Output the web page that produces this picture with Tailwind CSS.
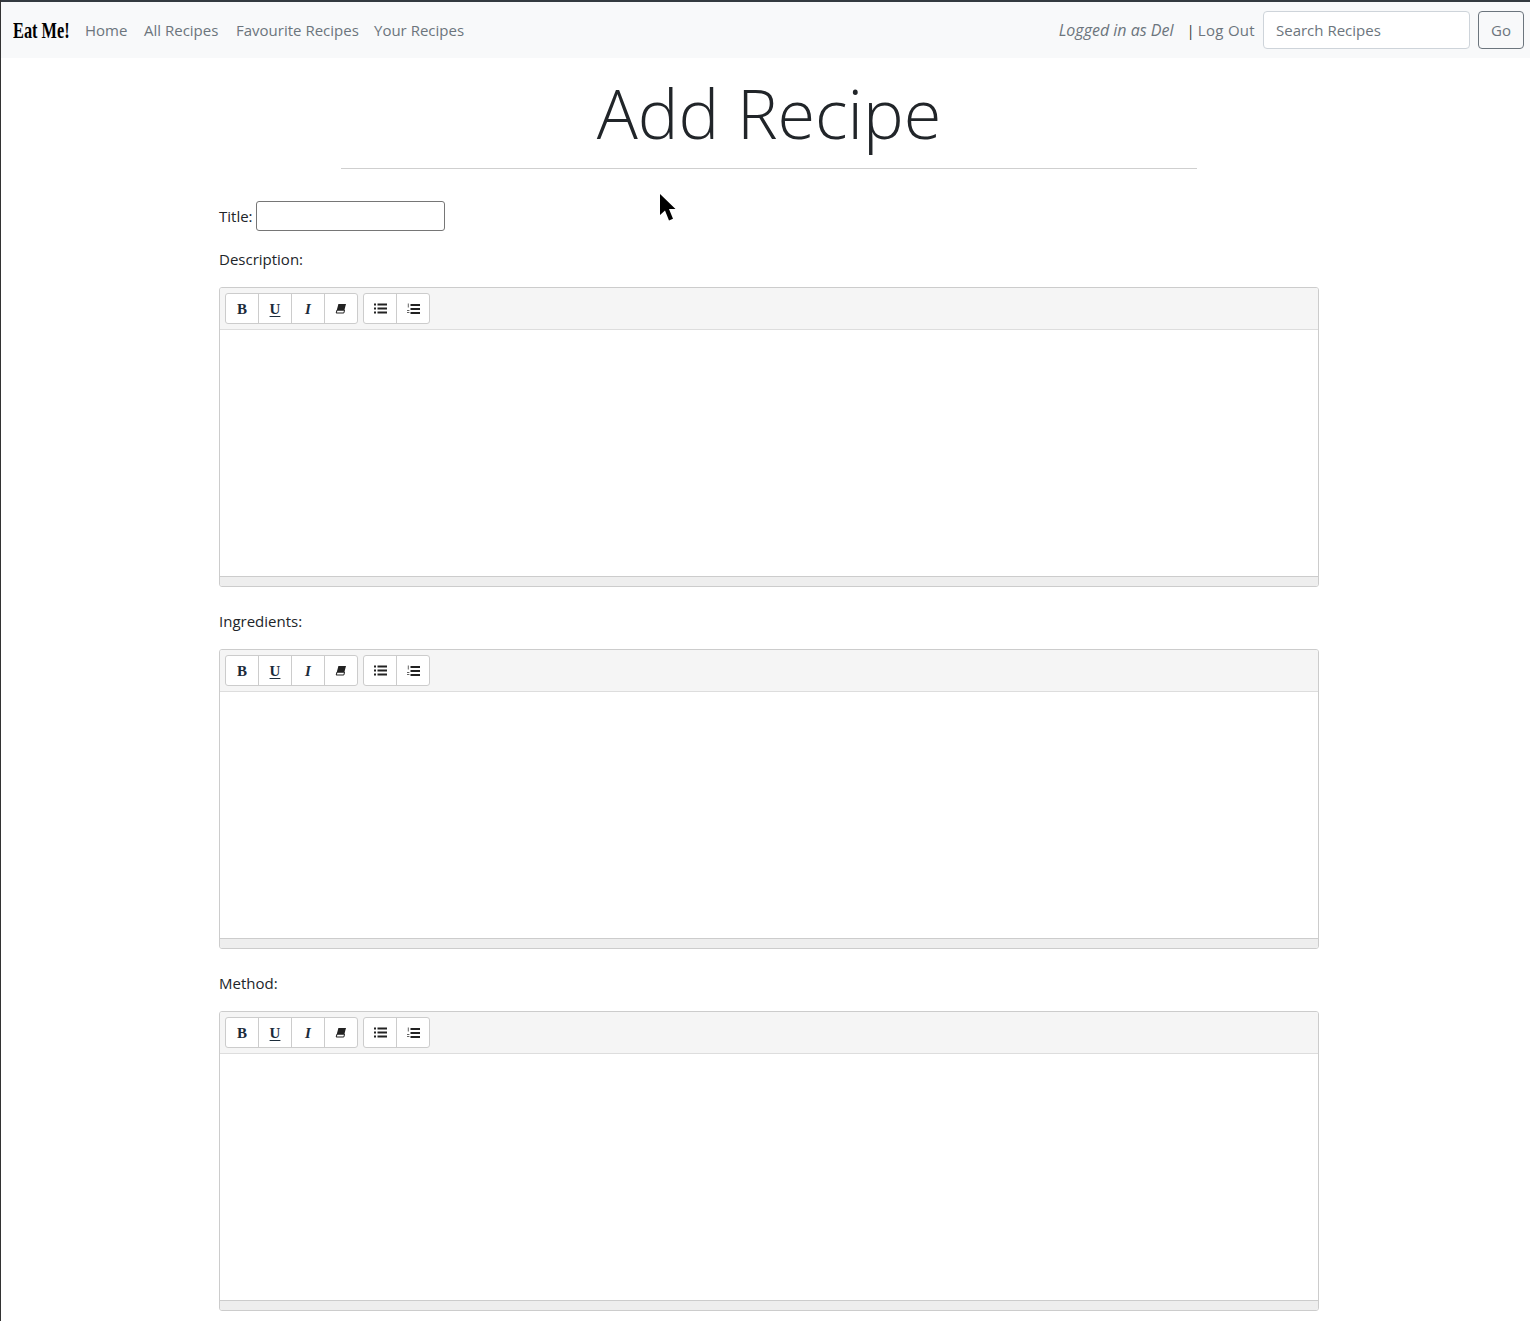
<!DOCTYPE html>
<html lang="en">
<head>
  <meta charset="UTF-8" />
  <meta name="viewport" content="width=device-width, initial-scale=1" />
  <title>Add Recipe</title>
  <script src="https://cdn.jsdelivr.net/npm/@tailwindcss/browser@4"></script>
</head>
<body class="relative h-[1321px] overflow-hidden bg-white border-l border-[#333] font-['Open_Sans',sans-serif] text-[15px] text-[#212529]">

  <!-- Navbar -->
  <nav class="flex items-center h-[58px] pl-3 pr-[6px] bg-[#f8f9fa] border-t-2 border-[#343a40] text-[#6c757d]">
    <a class="inline-block w-[56px] mr-4 font-['Liberation_Serif',serif] font-bold text-[24px] text-black origin-left scale-x-[0.68] whitespace-nowrap">Eat Me!</a>
    <a class="w-[43px] mr-4">Home</a>
    <a class="w-[76px] mr-4">All Recipes</a>
    <a class="w-[122px] mr-4 whitespace-nowrap">Favourite Recipes</a>
    <a>Your Recipes</a>
    <span class="ml-auto italic text-[16px] mr-[13px]">Logged in as Del</span>
    <span class="text-[#343a40]">|</span>
    <a class="ml-[3px] mr-2 tracking-[0.3px]">Log Out</a>
    <div class="flex items-center w-[207px] h-[38px] px-3 mr-2 bg-white border border-[#ced4da] rounded">Search Recipes</div>
    <button class="w-[46px] h-[38px] border border-[#6c757d] rounded">Go</button>
  </nav>

  <!-- Heading -->
  <main class="w-[1100px] ml-[218px]">
    <h1 class="mt-[14px] text-center font-['Open_Sans',sans-serif] font-light text-[68.400px] leading-[82px]">Add Recipe</h1>
    <hr class="w-[856px] mx-auto mt-[14px] border-[#cfcfcf]" />

    <div class="flex items-center mt-[32px] h-[30px]">
      <label>Title:</label>
      <input class="ml-[3px] w-[189px] h-[30px] bg-white border border-[#767676] rounded-[3px]" />
    </div>
    <label class="block mt-[16px] leading-[24px]">Description:</label>

    <!-- Description editor -->
    <div class="mt-4 h-[300px] flex flex-col border border-[#ccc] rounded-[3px] overflow-hidden">
      <div class="flex gap-[5px] h-[42px] shrink-0 pt-[5px] pl-[5px] bg-[#f5f5f5] border-b border-[#ddd]">
        <div class="flex h-[31px] bg-white border border-[#ccc] rounded-[3px] divide-x divide-[#ccc]">
          <span class="flex w-[33px] pt-px items-center justify-center font-['Liberation_Serif',serif] font-bold text-[15px] text-[#1b2b3a]">B</span>
          <span class="flex w-[33px] pt-px items-center justify-center font-['Liberation_Serif',serif] font-bold text-[15px] text-[#1b2b3a] underline underline-offset-2">U</span>
          <span class="flex w-[33px] pt-px items-center justify-center font-['Liberation_Serif',serif] font-bold italic text-[15px] text-[#1b2b3a]">I</span>
          <span class="flex w-[32px] items-center justify-center">
            <svg width="12" height="11" viewBox="0 0 12 11"><path d="M3.4 1h7.6L8.6 10H1z" fill="#222"/><path d="M2 7.2h7.6L8.8 10H1.2z" fill="#fff" stroke="#222"/></svg>
          </span>
        </div>
        <div class="flex h-[31px] bg-white border border-[#ccc] rounded-[3px] divide-x divide-[#ccc]">
          <span class="flex w-[33px] items-center justify-center">
            <svg width="13" height="11" viewBox="0 0 13 11" fill="#222"><rect y="0.5" width="2" height="2"/><rect y="4.5" width="2" height="2"/><rect y="8.5" width="2" height="2"/><rect x="3.5" y="0.5" width="9.5" height="2"/><rect x="3.5" y="4.5" width="9.5" height="2"/><rect x="3.5" y="8.5" width="9.5" height="2"/></svg>
          </span>
          <span class="flex w-[32px] items-center justify-center">
            <svg width="13" height="12" viewBox="0 0 13 12" fill="#222"><rect x="0.8" y="0.5" width="1" height="4" opacity=".7"/><rect y="7" width="2.4" height="1" opacity=".7"/><rect y="9" width="2.4" height="1" opacity=".7"/><rect x="3.5" y="1" width="9.5" height="2"/><rect x="3.5" y="5" width="9.5" height="2"/><rect x="3.5" y="9" width="9.5" height="2"/></svg>
          </span>
        </div>
      </div>
      <div class="flex-1 bg-white"></div>
      <div class="h-[10px] shrink-0 bg-[#eee] border-t border-[#ccc]"></div>
    </div>

    <label class="block mt-[22px] leading-[24px]">Ingredients:</label>

    <!-- Ingredients editor -->
    <div class="mt-4 h-[300px] flex flex-col border border-[#ccc] rounded-[3px] overflow-hidden">
      <div class="flex gap-[5px] h-[42px] shrink-0 pt-[5px] pl-[5px] bg-[#f5f5f5] border-b border-[#ddd]">
        <div class="flex h-[31px] bg-white border border-[#ccc] rounded-[3px] divide-x divide-[#ccc]">
          <span class="flex w-[33px] pt-px items-center justify-center font-['Liberation_Serif',serif] font-bold text-[15px] text-[#1b2b3a]">B</span>
          <span class="flex w-[33px] pt-px items-center justify-center font-['Liberation_Serif',serif] font-bold text-[15px] text-[#1b2b3a] underline underline-offset-2">U</span>
          <span class="flex w-[33px] pt-px items-center justify-center font-['Liberation_Serif',serif] font-bold italic text-[15px] text-[#1b2b3a]">I</span>
          <span class="flex w-[32px] items-center justify-center">
            <svg width="12" height="11" viewBox="0 0 12 11"><path d="M3.4 1h7.6L8.6 10H1z" fill="#222"/><path d="M2 7.2h7.6L8.8 10H1.2z" fill="#fff" stroke="#222"/></svg>
          </span>
        </div>
        <div class="flex h-[31px] bg-white border border-[#ccc] rounded-[3px] divide-x divide-[#ccc]">
          <span class="flex w-[33px] items-center justify-center">
            <svg width="13" height="11" viewBox="0 0 13 11" fill="#222"><rect y="0.5" width="2" height="2"/><rect y="4.5" width="2" height="2"/><rect y="8.5" width="2" height="2"/><rect x="3.5" y="0.5" width="9.5" height="2"/><rect x="3.5" y="4.5" width="9.5" height="2"/><rect x="3.5" y="8.5" width="9.5" height="2"/></svg>
          </span>
          <span class="flex w-[32px] items-center justify-center">
            <svg width="13" height="12" viewBox="0 0 13 12" fill="#222"><rect x="0.8" y="0.5" width="1" height="4" opacity=".7"/><rect y="7" width="2.4" height="1" opacity=".7"/><rect y="9" width="2.4" height="1" opacity=".7"/><rect x="3.5" y="1" width="9.5" height="2"/><rect x="3.5" y="5" width="9.5" height="2"/><rect x="3.5" y="9" width="9.5" height="2"/></svg>
          </span>
        </div>
      </div>
      <div class="flex-1 bg-white"></div>
      <div class="h-[10px] shrink-0 bg-[#eee] border-t border-[#ccc]"></div>
    </div>

    <label class="block mt-[22px] leading-[24px]">Method:</label>

    <!-- Method editor -->
    <div class="mt-4 h-[300px] flex flex-col border border-[#ccc] rounded-[3px] overflow-hidden">
      <div class="flex gap-[5px] h-[42px] shrink-0 pt-[5px] pl-[5px] bg-[#f5f5f5] border-b border-[#ddd]">
        <div class="flex h-[31px] bg-white border border-[#ccc] rounded-[3px] divide-x divide-[#ccc]">
          <span class="flex w-[33px] pt-px items-center justify-center font-['Liberation_Serif',serif] font-bold text-[15px] text-[#1b2b3a]">B</span>
          <span class="flex w-[33px] pt-px items-center justify-center font-['Liberation_Serif',serif] font-bold text-[15px] text-[#1b2b3a] underline underline-offset-2">U</span>
          <span class="flex w-[33px] pt-px items-center justify-center font-['Liberation_Serif',serif] font-bold italic text-[15px] text-[#1b2b3a]">I</span>
          <span class="flex w-[32px] items-center justify-center">
            <svg width="12" height="11" viewBox="0 0 12 11"><path d="M3.4 1h7.6L8.6 10H1z" fill="#222"/><path d="M2 7.2h7.6L8.8 10H1.2z" fill="#fff" stroke="#222"/></svg>
          </span>
        </div>
        <div class="flex h-[31px] bg-white border border-[#ccc] rounded-[3px] divide-x divide-[#ccc]">
          <span class="flex w-[33px] items-center justify-center">
            <svg width="13" height="11" viewBox="0 0 13 11" fill="#222"><rect y="0.5" width="2" height="2"/><rect y="4.5" width="2" height="2"/><rect y="8.5" width="2" height="2"/><rect x="3.5" y="0.5" width="9.5" height="2"/><rect x="3.5" y="4.5" width="9.5" height="2"/><rect x="3.5" y="8.5" width="9.5" height="2"/></svg>
          </span>
          <span class="flex w-[32px] items-center justify-center">
            <svg width="13" height="12" viewBox="0 0 13 12" fill="#222"><rect x="0.8" y="0.5" width="1" height="4" opacity=".7"/><rect y="7" width="2.4" height="1" opacity=".7"/><rect y="9" width="2.4" height="1" opacity=".7"/><rect x="3.5" y="1" width="9.5" height="2"/><rect x="3.5" y="5" width="9.5" height="2"/><rect x="3.5" y="9" width="9.5" height="2"/></svg>
          </span>
        </div>
      </div>
      <div class="flex-1 bg-white"></div>
      <div class="h-[10px] shrink-0 bg-[#eee] border-t border-[#ccc]"></div>
    </div>
  </main>

  <!-- Mouse pointer -->
  <svg class="absolute left-[658px] top-[193px]" width="18" height="30" viewBox="0 0 18 30" fill="#000"><path d="M1 1v21l5-4.500 4 10 4-1.700-4-9.800h6.500z"/></svg>
</body>
</html>
